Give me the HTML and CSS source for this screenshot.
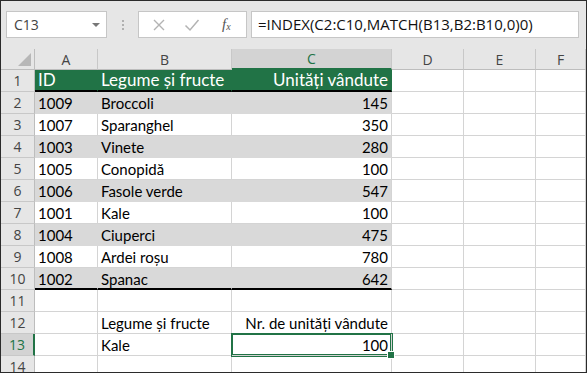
FILE: index.html
```html
<!DOCTYPE html>
<html lang="ro">
<head>
    <meta charset="UTF-8">
    <meta name="viewport" content="width=device-width, initial-scale=1.0">
    <title>INDEX si MATCH</title>
    <link rel="stylesheet" href="styles.css">
</head>
<body>
    <div class="app">
        <div class="toolbar">
            <div class="namebox">
                <span>C13</span>
                <span class="caret"></span>
            </div>
            <div class="grip"><i></i><i></i><i></i></div>
            <div class="fbuttons">
                <svg class="ico" width="14" height="14" viewBox="0 0 14 14"><path d="M2 2 L12 12 M12 2 L2 12" stroke="#b3b3b3" stroke-width="1.4" fill="none"/></svg>
                <svg class="ico" width="16" height="14" viewBox="0 0 16 14"><path d="M1.5 7.5 L6 12 L14.5 2" stroke="#b3b3b3" stroke-width="1.5" fill="none"/></svg>
                <span class="fx">f<sub>x</sub></span>
            </div>
            <div class="formula">=INDEX(C2:C10,MATCH(B13,B2:B10,0)0)</div>
        </div>

        <div class="sheet">
            <!-- column headers -->
            <div class="corner">
                <svg width="34" height="20" viewBox="0 0 34 20"><polygon points="17,17 30,4 30,17" fill="#b7b7b7"/></svg>
            </div>
            <div class="colhead">A</div>
            <div class="colhead">B</div>
            <div class="colhead active">C</div>
            <div class="colhead">D</div>
            <div class="colhead">E</div>
            <div class="colhead">F</div>

            <!-- row 1 -->
            <div class="rowhead">1</div>
            <div class="cell hd">ID</div>
            <div class="cell hd">Legume și fructe</div>
            <div class="cell hd num">Unități vândute</div>
            <div class="cell"></div><div class="cell"></div><div class="cell"></div>

            <div class="rowhead">2</div>
            <div class="cell band">1009</div>
            <div class="cell band">Broccoli</div>
            <div class="cell band num last">145</div>
            <div class="cell"></div><div class="cell"></div><div class="cell"></div>

            <div class="rowhead">3</div>
            <div class="cell">1007</div>
            <div class="cell">Sparanghel</div>
            <div class="cell num">350</div>
            <div class="cell"></div><div class="cell"></div><div class="cell"></div>

            <div class="rowhead">4</div>
            <div class="cell band">1003</div>
            <div class="cell band">Vinete</div>
            <div class="cell band num last">280</div>
            <div class="cell"></div><div class="cell"></div><div class="cell"></div>

            <div class="rowhead">5</div>
            <div class="cell">1005</div>
            <div class="cell">Conopidă</div>
            <div class="cell num">100</div>
            <div class="cell"></div><div class="cell"></div><div class="cell"></div>

            <div class="rowhead">6</div>
            <div class="cell band">1006</div>
            <div class="cell band">Fasole verde</div>
            <div class="cell band num last">547</div>
            <div class="cell"></div><div class="cell"></div><div class="cell"></div>

            <div class="rowhead">7</div>
            <div class="cell">1001</div>
            <div class="cell">Kale</div>
            <div class="cell num">100</div>
            <div class="cell"></div><div class="cell"></div><div class="cell"></div>

            <div class="rowhead">8</div>
            <div class="cell band">1004</div>
            <div class="cell band">Ciuperci</div>
            <div class="cell band num last">475</div>
            <div class="cell"></div><div class="cell"></div><div class="cell"></div>

            <div class="rowhead">9</div>
            <div class="cell">1008</div>
            <div class="cell">Ardei roșu</div>
            <div class="cell num">780</div>
            <div class="cell"></div><div class="cell"></div><div class="cell"></div>

            <div class="rowhead">10</div>
            <div class="cell band end">1002</div>
            <div class="cell band end">Spanac</div>
            <div class="cell band num last end">642</div>
            <div class="cell"></div><div class="cell"></div><div class="cell"></div>

            <div class="rowhead">11</div>
            <div class="cell"></div><div class="cell"></div><div class="cell"></div>
            <div class="cell"></div><div class="cell"></div><div class="cell"></div>

            <div class="rowhead">12</div>
            <div class="cell"></div>
            <div class="cell">Legume și fructe</div>
            <div class="cell num">Nr. de unități vândute</div>
            <div class="cell"></div><div class="cell"></div><div class="cell"></div>

            <div class="rowhead active">13</div>
            <div class="cell"></div>
            <div class="cell">Kale</div>
            <div class="cell num selected">100</div>
            <div class="cell"></div><div class="cell"></div><div class="cell"></div>

            <div class="rowhead">14</div>
            <div class="cell"></div><div class="cell"></div><div class="cell"></div>
            <div class="cell"></div><div class="cell"></div><div class="cell"></div>
        </div>
    </div>
</body>
</html>
```

FILE: styles.css
```css
* {
    box-sizing: border-box;
}
body {
    margin: 0;
    background: #fff;
}
.app {
    width: 587px;
    height: 373px;
    border: 1px solid #2b2b2b;
    overflow: hidden;
    background: #e6e6e6;
    font-family: "Open Sans", "Noto Sans", sans-serif;
}

/* formula bar */
.toolbar {
    height: 48px;
    display: flex;
    align-items: flex-start;
    padding: 10px 0 0 5px;
}
.namebox {
    width: 101px;
    height: 27px;
    background: #fff;
    border: 1px solid #c6c6c6;
    display: flex;
    align-items: center;
    justify-content: space-between;
    padding: 0 6px 0 7px;
    font-size: 14px;
    color: #444;
}
.caret {
    width: 0;
    height: 0;
    border-left: 4px solid transparent;
    border-right: 4px solid transparent;
    border-top: 4px solid #777;
}
.grip {
    width: 31px;
    height: 27px;
    display: flex;
    flex-direction: column;
    align-items: center;
    justify-content: center;
    gap: 2px;
}
.grip i {
    width: 2px;
    height: 2px;
    background: #b0b0b0;
}
.fbuttons {
    width: 109px;
    height: 27px;
    background: #fff;
    border: 1px solid #c6c6c6;
    display: flex;
    align-items: center;
    padding: 0 10px 0 13px;
    gap: 18px;
}
.fx {
    font-family: "Liberation Serif", serif;
    font-style: italic;
    font-size: 15px;
    color: #555;
    margin-left: 4px;
}
.fx sub {
    font-size: 10px;
    vertical-align: -1px;
}
.formula {
    margin-left: 4px;
    width: 328px;
    height: 27px;
    background: #fff;
    border: 1px solid #c6c6c6;
    padding: 0 6px;
    font-size: 15px;
    line-height: 25px;
    color: #111;
    white-space: nowrap;
}

/* grid */
.sheet {
    display: grid;
    grid-template-columns: 34px 63px 134px 160px 72px 72px 1fr;
    grid-template-rows: 21px repeat(14, 22px);
    background: #fff;
    font-family: Lato, "Open Sans", sans-serif;
    font-size: 15px;
}
.corner, .colhead, .rowhead {
    background: #e6e6e6;
    color: #444;
    font-family: "Open Sans", "Noto Sans", sans-serif;
    font-size: 14px;
}
.corner {
    border-right: 1px solid #bdbdbd;
    border-bottom: 1px solid #bdbdbd;
}
.corner svg {
    display: block;
}
.colhead {
    display: flex;
    align-items: center;
    justify-content: center;
    border-right: 1px solid #c8c8c8;
    border-bottom: 1px solid #bdbdbd;
}
.colhead.active {
    background: #d3d3d3;
    color: #217346;
    border-bottom: 2px solid #217346;
}
.rowhead {
    display: flex;
    align-items: center;
    justify-content: center;
    border-right: 1px solid #bdbdbd;
    border-bottom: 1px solid #c8c8c8;
}
.rowhead.active {
    background: #d3d3d3;
    color: #217346;
    border-right: 2px solid #217346;
}
.cell {
    border-right: 1px solid #d4d4d4;
    border-bottom: 1px solid #d4d4d4;
    display: flex;
    align-items: flex-end;
    padding: 0 3px 1px 3px;
    color: #000;
    white-space: nowrap;
}
.num {
    justify-content: flex-end;
}
.hd {
    background: #217346;
    color: #fff;
    font-size: 17px;
    border-right-color: #217346;
    border-bottom: 2px solid #000;
    padding-bottom: 0;
}
.band {
    background: #d9d9d9;
    border-right-color: #d9d9d9;
    border-bottom-color: #d9d9d9;
}
.band.last {
    border-right-color: #d4d4d4;
}
.end {
    border-bottom: 2px solid #000;
    padding-bottom: 0;
}
.selected {
    position: relative;
    box-shadow: 0 0 0 1px #217346, inset 0 0 0 1px #217346;
}
.selected::after {
    content: "";
    position: absolute;
    right: -4px;
    bottom: -4px;
    width: 6px;
    height: 6px;
    background: #217346;
    border: 1px solid #fff;
}
```
